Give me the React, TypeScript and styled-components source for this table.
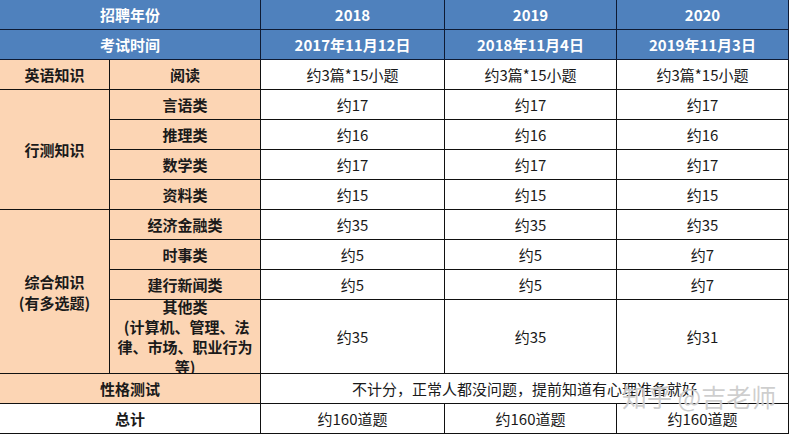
import React from "react";
import styled, { createGlobalStyle, css } from "styled-components";

const Global = createGlobalStyle`
  html, body { margin: 0; padding: 0; background: #ffffff; }
  body { font-family: "Noto Sans CJK SC", "Noto Sans", sans-serif; }
`;

type Tone = "blue" | "peach" | "white";

const Wrap = styled.div`
  position: relative;
  width: 789px;
  height: 434px;
  overflow: hidden;
`;

const Grid = styled.div`
  display: grid;
  grid-template-columns: 110px 151px 184px 172px 172px;
  grid-template-rows: repeat(10, 30px) 74px 30px 30px;
  width: 789px;
`;

const Cell = styled.div<{
  $tone?: Tone;
  $bold?: boolean;
  $cols?: number;
  $rows?: number;
}>`
  box-sizing: border-box;
  display: flex;
  align-items: center;
  justify-content: center;
  text-align: center;
  overflow: hidden;
  font-size: 15px;
  line-height: 20px;
  color: #1a1a1a;
  border-right: 1px solid #111;
  border-bottom: 1px solid #111;
  background: #ffffff;
  font-weight: ${(p) => (p.$bold ? 700 : 400)};
  ${(p) => p.$cols && css`grid-column: span ${p.$cols};`}
  ${(p) => p.$rows && css`grid-row: span ${p.$rows};`}
  ${(p) =>
    p.$tone === "blue" &&
    css`
      background: #4f81bd;
      color: #ffffff;
      font-weight: 700;
      border-color: #0e1a33;
    `}
  ${(p) =>
    p.$tone === "peach" &&
    css`
      background: #fcd5b4;
    `}
`;

const Stack = styled.div<{ $lh?: number }>`
  line-height: ${(p) => p.$lh ?? 20}px;
`;

const Watermark = styled.div`
  position: absolute;
  left: 622px;
  top: 381px;
  font-size: 25px;
  line-height: 30px;
  white-space: nowrap;
  color: rgba(185, 185, 185, 0.7);
  text-shadow: 0 0 1px rgba(255, 255, 255, 0.9);
  pointer-events: none;
`;

const years = ["2018", "2019", "2020"];
const dates = ["2017年11月12日", "2018年11月4日", "2019年11月3日"];

type Row = { label: string; values: string[] };

const xingce: Row[] = [
  { label: "言语类", values: ["约17", "约17", "约17"] },
  { label: "推理类", values: ["约16", "约16", "约16"] },
  { label: "数学类", values: ["约17", "约17", "约17"] },
  { label: "资料类", values: ["约15", "约15", "约15"] },
];

const zonghe: Row[] = [
  { label: "经济金融类", values: ["约35", "约35", "约35"] },
  { label: "时事类", values: ["约5", "约5", "约7"] },
  { label: "建行新闻类", values: ["约5", "约5", "约7"] },
];

const Values = ({ values }: { values: string[] }) => (
  <>
    {values.map((v, i) => (
      <Cell key={i}>{v}</Cell>
    ))}
  </>
);

export default function App() {
  return (
    <>
      <Global />
      <Wrap>
        <Grid>
          <Cell $tone="blue" $cols={2}>招聘年份</Cell>
          {years.map((y) => (
            <Cell key={y} $tone="blue">{y}</Cell>
          ))}
          <Cell $tone="blue" $cols={2}>考试时间</Cell>
          {dates.map((d) => (
            <Cell key={d} $tone="blue">{d}</Cell>
          ))}

          <Cell $tone="peach" $bold>英语知识</Cell>
          <Cell $tone="peach" $bold>阅读</Cell>
          <Values values={["约3篇*15小题", "约3篇*15小题", "约3篇*15小题"]} />

          <Cell $tone="peach" $bold $rows={4}>行测知识</Cell>
          {xingce.map((r) => (
            <React.Fragment key={r.label}>
              <Cell $tone="peach" $bold>{r.label}</Cell>
              <Values values={r.values} />
            </React.Fragment>
          ))}

          <Cell $tone="peach" $bold $rows={4}>
            <Stack $lh={21}>
              综合知识
              <br />
              (有多选题)
            </Stack>
          </Cell>
          {zonghe.map((r) => (
            <React.Fragment key={r.label}>
              <Cell $tone="peach" $bold>{r.label}</Cell>
              <Values values={r.values} />
            </React.Fragment>
          ))}
          <Cell $tone="peach" $bold>
            <Stack>
              其他类
              <br />
              &nbsp;(计算机、管理、法
              <br />
              律、市场、职业行为
              <br />
              等)
            </Stack>
          </Cell>
          <Values values={["约35", "约35", "约31"]} />

          <Cell $tone="peach" $bold $cols={2}>性格测试</Cell>
          <Cell $cols={3}>不计分，正常人都没问题，提前知道有心理准备就好</Cell>

          <Cell $bold $cols={2}>总计</Cell>
          <Values values={["约160道题", "约160道题", "约160道题"]} />
        </Grid>
        <Watermark>知乎 @吉老师</Watermark>
      </Wrap>
    </>
  );
}
